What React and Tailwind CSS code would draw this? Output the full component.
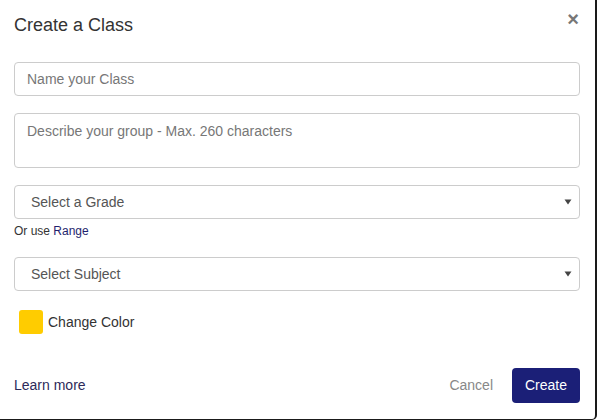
import React from "react";

function Arrow() {
  return (
    <svg width="8" height="6" viewBox="0 0 8 6" className="text-[#444]">
      <path d="M0.5 0.5 L7.5 0.5 L4 5.5 Z" fill="currentColor" />
    </svg>
  );
}

export default function App() {
  const font = { fontFamily: '"Liberation Sans", Arial, sans-serif' };
  return (
    <div className="w-[598px] h-[420px] bg-white" style={font}>
      <div className="w-[597px] h-[420px] bg-white border-r-2 border-b border-[#1a1a1a] rounded-br-[5px] flex flex-col">
        <div className="flex items-start justify-between pl-[14px] pr-[16px] pt-[15px]">
          <h1 className="text-[18px] leading-[20px] text-[#333]">Create a Class</h1>
          <button className="text-[#777] text-[20px] leading-[14px] font-bold -mt-[3px]">×</button>
        </div>
        <div className="flex flex-col pl-[14px] pr-[15px] mt-[27px]">
          <div className="h-[34px] border border-[#ccc] rounded-[4px] flex items-center px-[12px] text-[14px] text-[#777]">
            Name your Class
          </div>
          <div className="h-[55px] mt-[17px] border border-[#ccc] rounded-[4px] px-[12px] pt-[9px] text-[14px] leading-[16px] text-[#777]">
            Describe your group - Max. 260 characters
          </div>
          <div className="h-[34px] mt-[17px] border border-[#ccc] rounded-[4px] flex items-center justify-between pl-[16px] pr-[7px] text-[14px] text-[#555]">
            <span>Select a Grade</span>
            <Arrow />
          </div>
          <div className="mt-[5px] text-[12px] leading-[14px] text-[#333]">
            Or use <span className="text-[#1f1f6e]">Range</span>
          </div>
          <div className="h-[34px] mt-[19px] border border-[#ccc] rounded-[4px] flex items-center justify-between pl-[16px] pr-[7px] text-[14px] text-[#555]">
            <span>Select Subject</span>
            <Arrow />
          </div>
          <div className="flex items-center mt-[19px] ml-[5px] gap-[5px]">
            <div className="w-[24px] h-[24px] rounded-[3px] bg-[#ffcc00]" />
            <span className="text-[14px] text-[#333]">Change Color</span>
          </div>
        </div>
        <div className="flex items-center justify-between pl-[14px] pr-[15px] mt-[34px]">
          <span className="text-[14px] text-[#2d2a5a]">Learn more</span>
          <div className="flex items-center">
            <span className="text-[14px] text-[#888] mr-[19px]">Cancel</span>
            <button className="h-[35px] w-[68px] rounded-[4px] bg-[#1b1f77] text-white text-[14px]">Create</button>
          </div>
        </div>
      </div>
    </div>
  );
}
